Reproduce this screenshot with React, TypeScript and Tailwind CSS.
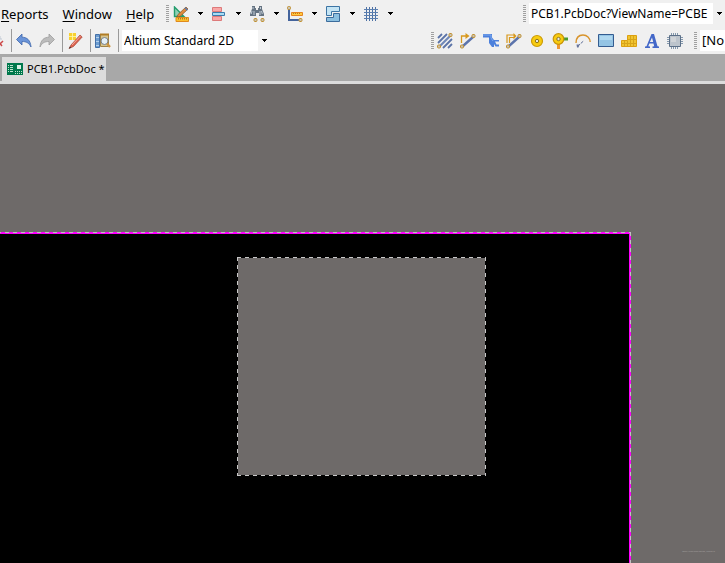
import { ReactNode, useState } from "react";

const MENUS = ["Reports", "Window", "Help"];

const Svg = ({ children }: { children: ReactNode }) => (
  <svg className="block size-4 shrink-0" viewBox="0 0 16 16" fill="none">
    {children}
  </svg>
);

const Caret = () => (
  <svg className="block h-[3px] w-[5px] shrink-0" viewBox="0 0 5 3">
    <path d="M0 0h5v1H4v1H3v1H2V2H1V1H0z" fill="#000" />
  </svg>
);

const Grip = () => (
  <span className="h-[18px] w-[3px] shrink-0 bg-[repeating-linear-gradient(180deg,#a0a0a0_0_1px,#f1f1f1_1px_2px)]" />
);

const Separator = () => <span className="h-[23px] w-px shrink-0 bg-[#9a9a9a]" />;

const Pad = ({ x, y }: { x: number; y: number }) => (
  <rect x={x} y={y} width="3" height="3" rx="1" fill="#c9c3b4" stroke="#c09030" />
);

const DraftIcon = () => (
  <Svg>
    <path d="M1.500 1v9.500H11z" fill="#8fd0b4" stroke="#239c6c" strokeWidth="1.400" />
    <path d="M5 8.500 13 1l2 2-8 7.500-3 .5z" fill="#e08a3c" stroke="#8c5a2c" strokeWidth=".8" />
    <path d="m12 1.800 2.400 2.400" stroke="#5a7ab0" strokeWidth="1.500" />
    <path d="M3 11.500h12.500v4H3z" fill="#fbc02d" stroke="#e08a1c" />
    <path d="M5.500 12v1.500m2-1.500v1.500m2-1.500v1.500m2-1.500v1.500m2-1.500v1.500" stroke="#a8641c" strokeWidth=".8" />
  </Svg>
);

const AlignIcon = () => (
  <Svg>
    <path d="M1.500 1.500h9v4h-9zM1.500 10.500h9v4h-9z" fill="#f9a7a7" stroke="#dd7a7a" />
    <path d="M1.500 6.500h12v3h-12z" fill="#a8dcf4" stroke="#3c7cac" />
  </Svg>
);

const BinocularsIcon = () => (
  <Svg>
    <path d="M3 0h3v2h1v2h2V2h1V0h3v3l2 5v2h-5V7H7v3H1V8l2-5z" fill="#667482" />
    <path d="M4 1v2M11.500 1v2M3 5l-.8 3M12.500 5l.8 3M5 5v4M11 5v4" stroke="#c2ccd6" />
    <Pad x={5} y={12.500} />
    <Pad x={12} y={12.500} />
  </Svg>
);

const DimensionIcon = () => (
  <Svg>
    <path d="M2 3v11h11" stroke="#44649c" strokeWidth="2" />
    <path d="M4.500 6.500h11v3h-11z" fill="#ffc83c" stroke="#e48420" />
    <path d="M6.500 7v1m2-1v1m2-1v1m2-1v1" stroke="#a86414" strokeWidth=".8" />
    <Pad x={0.500} y={0.500} />
    <Pad x={12} y={12.500} />
  </Svg>
);

const RoomIcon = () => (
  <Svg>
    <path d="M1.500.5h13v5h-8v4h-5z" fill="#c4e4f4" stroke="#3c74a4" />
    <path d="M14.500 7.500v8h-13v-4h7v-4z" fill="#8cc0e0" stroke="#3c6c9c" />
  </Svg>
);

const GridIcon = () => (
  <Svg>
    <path d="M3.500 1v14m3-14v14m3-14v14m3-14v14" stroke="#4c70a4" />
    <path d="M1 3.500h14m-14 3h14m-14 3h14m-14 3h14" stroke="#5c80b0" />
  </Svg>
);

const UndoIcon = () => (
  <Svg>
    <path d="M6 1v3.200c5 0 8.500 3 9 9.800-2-4-4.500-5.500-9-5.500V12L.5 6.500z" fill="#6a94d8" stroke="#3c66ac" strokeWidth=".8" />
  </Svg>
);

const RedoIcon = () => (
  <Svg>
    <path d="M10 1v3.200c-5 0-8.500 3-9 9.800 2-4 4.500-5.500 9-5.500V12l5.500-5.500z" fill="#bcbcbc" stroke="#9c9c9c" strokeWidth=".8" />
  </Svg>
);

const WizardIcon = () => (
  <Svg>
    <path d="M2 0h7v7H2z" fill="#f8d030" />
    <path d="M5.500 0v7M2 3.500h7" stroke="#fff8b0" strokeWidth=".8" />
    <path d="M4 12 13 2l2.200 2L6.500 13.500 2 15.500z" fill="#dc6450" stroke="#a84838" strokeWidth=".7" />
    <path d="m5 12 8.500-9" stroke="#f8a898" />
    <path d="m2 15.500 1-2 1.200 1.200z" fill="#333" />
  </Svg>
);

const InspectIcon = () => (
  <Svg>
    <path d="M.5 1.500h4v13h-4z" fill="#6c9cd0" stroke="#4470a8" />
    <path d="M1 4.500h3m-3 4h3m-3 4h3" stroke="#b4d0ec" />
    <path d="M5.500 1.500h8v12h-8z" fill="#d8c48c" stroke="#a08448" />
    <path d="M5 1.500h9" stroke="#b07c24" strokeWidth="2" />
    <circle cx="9.500" cy="8" r="3.500" fill="#e4f0f8" stroke="#78828c" />
    <path d="m12 10.500 3 3.500" stroke="#cc9440" strokeWidth="2.200" />
  </Svg>
);

const MultiRouteIcon = () => (
  <Svg>
    <path d="m1 5 4-4M1 10 10 1M6 15 15 6M11 15l4-4" stroke="#5c74a8" strokeWidth="1.800" />
    <path d="M3 13 13 3" stroke="#7088b8" strokeWidth="2.200" />
    <Pad x={0.500} y={12} />
    <Pad x={12} y={0.500} />
  </Svg>
);

const RouteIcon = () => (
  <Svg>
    <path d="M3 13 13 4" stroke="#5c74ac" strokeWidth="2.400" />
    <path d="M1.500 10V3H7" stroke="#d8981c" strokeWidth="1.300" />
    <path d="m5.500 0 4 3-4 3z" fill="#d8981c" />
    <Pad x={0.500} y={12} />
    <Pad x={12} y={1.500} />
  </Svg>
);

const FanoutIcon = () => (
  <Svg>
    <path d="M0 1h9v3.500l2 2.500h5v1.500h-4l1.500 3H16v2h-3.500L11 11v3H9L6 10V4.500H0z" fill="#4c80dc" />
    <path d="M0 2h8v3l2 3" stroke="#7ca8ec" />
  </Svg>
);

const DiffRouteIcon = () => (
  <Svg>
    <path d="M3 13 13 4" stroke="#5c74ac" strokeWidth="2.400" />
    <path d="M1 10V2h7M3.500 10V4.500H8" stroke="#d8981c" strokeWidth="1.200" />
    <path d="m7.500 0 3 3-3 3.500z" fill="#d8981c" />
    <Pad x={0.500} y={12} />
    <Pad x={12} y={1.500} />
  </Svg>
);

const PadIcon = () => (
  <Svg>
    <circle cx="8" cy="8" r="5.500" fill="#f8cc10" stroke="#cc9c08" strokeWidth="1.200" />
    <circle cx="8" cy="8" r="1.700" fill="#e8e8e0" stroke="#8c7420" />
  </Svg>
);

const ViaIcon = () => (
  <Svg>
    <path d="M10 4.500h6v3h-6z" fill="#4c9c2c" />
    <path d="M5 10h3v6H5z" fill="#f09830" />
    <circle cx="6.500" cy="6" r="5.300" fill="#f8cc10" stroke="#c89408" strokeWidth="1.200" />
    <circle cx="6.500" cy="6" r="1.700" fill="#e8e8e0" stroke="#8c7420" />
  </Svg>
);

const ArcIcon = () => (
  <Svg>
    <path d="M1 10C1 4.500 4 2 8 2s7 3 7.200 7" stroke="#d8942c" strokeWidth="1.400" />
    <path d="m3 13 5.500-5" stroke="#5c6c94" strokeDasharray="3 1" />
    <path d="M1.500 11.500h3l-1 3H2z" fill="#66749c" />
  </Svg>
);

const FillIcon = () => (
  <Svg>
    <path d="M.5 1.500h15v12H.5z" fill="#94c4e4" stroke="#345c90" />
    <path d="M2 3h12v4H2z" fill="#b0d8f0" />
  </Svg>
);

const PolygonIcon = () => (
  <Svg>
    <path d="M6.500 2.500h9v11H.5v-6h6z" fill="#f0c430" stroke="#dca010" />
    <path d="M1 10.500h14M7 6.500h8M3.500 8v5m3-5v5m3-10v10m3-10v10" stroke="#d8a418" />
  </Svg>
);

const StringIcon = () => (
  <Svg>
    <path
      fillRule="evenodd"
      d="M7.500 1h2.500l3.500 12.200 1.500.4V15H8.500v-1.400l1.700-.4-.7-2.700H5.300L4.300 13.200l1.700.4V15H1v-1.400l1.500-.4zM8 4.500 5.900 9H9.200z"
      fill="#4468c8"
    />
  </Svg>
);

const ChipIcon = () => (
  <Svg>
    <path d="M4.500 0v16m2-16v16m2-16v16m2-16v16M0 4.500h16m-16 2h16m-16 2h16m-16 2h16" stroke="#8498ac" />
    <path d="M2.500 2.500h11v11h-11z" fill="#bcc4cc" stroke="#5c7088" />
    <path d="M4 4h5v5H4z" fill="#d0d4d8" />
  </Svg>
);

const PcbIcon = () => (
  <svg className="block h-3 w-4 shrink-0" viewBox="0 0 16 12" fill="none">
    <path d="M0 0h16v12H0z" fill="#00784c" />
    <path d="M1 2.500h1m1 0h3M1 4.500h1m1 0h3M1 6.500h1m1 0h3M1 8.500h1m1 0h3" stroke="#c0e4d0" />
    <path d="M10 2h4v4h-4z" fill="#d8f0e4" />
    <path d="M8.500 8v3m2-3v3m2-3v3m2-3v3" stroke="#c0e4d0" strokeDasharray="1 1" />
  </svg>
);

const UTILITIES = [
  { label: "Drafting", icon: <DraftIcon /> },
  { label: "Align", icon: <AlignIcon /> },
  { label: "Find", icon: <BinocularsIcon /> },
  { label: "Dimension", icon: <DimensionIcon /> },
  { label: "Rooms", icon: <RoomIcon /> },
  { label: "Grid", icon: <GridIcon /> },
];

const WIRING = [
  { label: "Route multiple", icon: <MultiRouteIcon /> },
  { label: "Route", icon: <RouteIcon /> },
  { label: "Fanout", icon: <FanoutIcon /> },
  { label: "Route differential pair", icon: <DiffRouteIcon /> },
  { label: "Place pad", icon: <PadIcon /> },
  { label: "Place via", icon: <ViaIcon /> },
  { label: "Place arc", icon: <ArcIcon /> },
  { label: "Place fill", icon: <FillIcon /> },
  { label: "Place polygon", icon: <PolygonIcon /> },
  { label: "Place string", icon: <StringIcon /> },
  { label: "Place component", icon: <ChipIcon /> },
];

const ToolButton = ({ label, children }: { label: string; children: ReactNode }) => (
  <button type="button" aria-label={label} className="flex w-[23px] shrink-0 items-center">
    {children}
  </button>
);

function MenuRow() {
  const [address, setAddress] = useState("PCB1.PcbDoc?ViewName=PCBE");

  return (
    <div className="flex h-[27px] items-center">
      <nav className="flex gap-3.5 pl-px">
        {MENUS.map((menu) => (
          <button key={menu} type="button" className="leading-5">
            <span className="underline underline-offset-2">{menu[0]}</span>
            {menu.slice(1)}
          </button>
        ))}
      </nav>
      <div className="ml-3 flex items-center">
        <Grip />
        <div className="ml-1 flex">
          {UTILITIES.map(({ label, icon }) => (
            <button
              key={label}
              type="button"
              aria-label={label}
              className="flex w-[38px] items-center gap-[9px]"
            >
              {icon}
              <Caret />
            </button>
          ))}
        </div>
      </div>
      <div className="ml-auto flex w-[202px] shrink-0 items-center gap-[3px]">
        <Grip />
        <div className="flex h-[21px] min-w-0 flex-1 bg-white">
          <input
            aria-label="Address"
            className="min-w-0 flex-1 pl-0.5 text-xs outline-none"
            value={address}
            onChange={(e) => setAddress(e.target.value)}
          />
          <button
            type="button"
            aria-label="Recent addresses"
            className="flex w-3 shrink-0 items-center justify-center bg-[#f0f0f0]"
          >
            <Caret />
          </button>
        </div>
      </div>
    </div>
  );
}

function ToolRow() {
  return (
    <div className="flex h-[27px] items-center">
      <div className="flex items-center">
        <button type="button" aria-label="Clear" className="w-[11px]">
          <svg className="block h-4 w-[7px]" viewBox="0 0 7 16" fill="none">
            <path d="m-2 8 4 5M3 8l-5 5" stroke="#cc4848" strokeWidth="1.500" />
            <path d="M0 3v3h2" stroke="#c0c8d4" />
          </svg>
        </button>
        <Separator />
        <div className="flex pl-1">
          <ToolButton label="Undo"><UndoIcon /></ToolButton>
          <ToolButton label="Redo"><RedoIcon /></ToolButton>
        </div>
        <Separator />
        <div className="flex pl-1">
          <ToolButton label="Wizard"><WizardIcon /></ToolButton>
        </div>
        <Separator />
        <div className="flex pl-1">
          <ToolButton label="Inspect"><InspectIcon /></ToolButton>
        </div>
        <Separator />
        <div className="relative ml-[3px] flex">
          <select
            aria-label="View configuration"
            className="h-[21px] w-[148px] appearance-none bg-white pl-0.5 text-xs outline-none"
          >
            <option>Altium Standard 2D</option>
          </select>
          <span className="pointer-events-none absolute inset-y-0 right-0 flex w-3 items-center justify-center bg-[#f4f4f4]">
            <Caret />
          </span>
        </div>
      </div>
      <div className="ml-auto flex shrink-0 items-center">
        <Grip />
        <div className="ml-[3px] flex">
          {WIRING.map(({ label, icon }) => (
            <ToolButton key={label} label={label}>{icon}</ToolButton>
          ))}
        </div>
        <span className="ml-1 flex"><Grip /></span>
        <button
          type="button"
          className="ml-[3px] h-[21px] w-[25px] overflow-hidden bg-white pl-0.5 text-left whitespace-nowrap"
        >
          [No
        </button>
      </div>
    </div>
  );
}

function Board() {
  return (
    <main className="relative flex flex-1 bg-[#6e6a69] pt-[148px] pr-[94px]">
      <section className="relative flex-1 bg-black pt-[25px] pl-[237px]">
        {/* board outline, with the keep-out dashes over it */}
        <span className="absolute inset-x-0 top-0 h-0.5 bg-[#ff00ff]" />
        <span className="absolute inset-y-0 right-0 w-0.5 bg-[#ff00ff]" />
        <span className="absolute inset-x-0 top-0 h-px bg-[repeating-linear-gradient(90deg,#c0c0c0_0_1px,#ff00ff_1px_5px,#c0c0c0_5px_8px)]" />
        <span className="absolute inset-y-0 right-0 w-px bg-[repeating-linear-gradient(180deg,#c0c0c0_0_4px,#ff00ff_4px_8px)]" />
        <svg className="block h-[219px] w-[249px]" viewBox="0 0 249 219" fill="none">
          <path d="M1 1h247v217H1z" fill="#6e6a69" />
          <path d="M0 .5h249M.5 0v219M0 218.500h249M248.500 0v219" stroke="#c8c8c8" strokeDasharray="4 4" />
        </svg>
      </section>
      <span className="absolute right-2.5 bottom-2.5 text-[2px] leading-[3px] text-[#a8a4a3]">
        https://blog.csdn.net/qq_43668715
      </span>
    </main>
  );
}

export default function App() {
  return (
    <div className="flex min-h-screen flex-col overflow-hidden bg-[#f0f0f0] font-['Noto_Sans','Open_Sans',sans-serif] text-[13px] text-black">
      <header>
        <MenuRow />
        <ToolRow />
      </header>
      <div className="flex h-[30px] items-end border-b-[3px] border-[#dcdcdc] bg-[#a8a8a8] pl-0.5">
        <button
          type="button"
          className="flex h-6 w-[104px] items-center gap-1 bg-[#dcdcdc] pl-[5px] text-[11px] whitespace-nowrap"
        >
          <PcbIcon />
          PCB1.PcbDoc *
        </button>
      </div>
      <Board />
    </div>
  );
}
